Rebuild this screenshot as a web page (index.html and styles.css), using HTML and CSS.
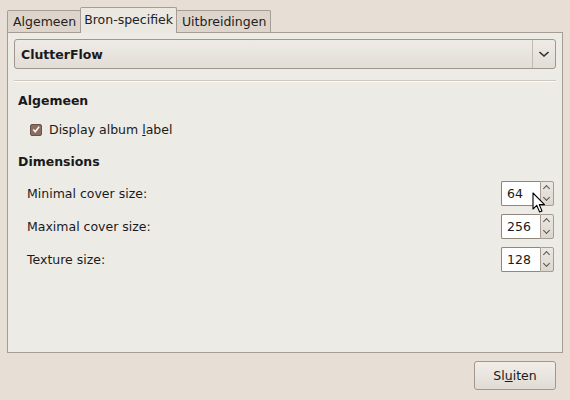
FILE: index.html
```html
<!DOCTYPE html>
<html>
<head>
<meta charset="utf-8">
<link rel="stylesheet" href="styles.css">
</head>
<body>
<div class="window">
  <div class="tabs">
    <div class="tab">Algemeen</div>
    <div class="tab active">Bron-specifiek</div>
    <div class="tab">Uitbreidingen</div>
  </div>
  <div class="panel">
    <div class="combo">
      <span class="combo-text">ClutterFlow</span>
      <span class="combo-arrow">
        <svg width="12" height="8" viewBox="0 0 12 8"><path d="M1.5 2 L6 6 L10.5 2" fill="none" stroke="#2e2e2e" stroke-width="1.6"/></svg>
      </span>
    </div>
    <div class="sep"></div>
    <div class="section-title">Algemeen</div>
    <label class="check-row">
      <span class="checkbox">
        <svg width="11" height="11" viewBox="0 0 11 11"><path d="M2.5 5.5 L4.7 8 L9 2.3" fill="none" stroke="#fff" stroke-width="1.7"/></svg>
      </span>
      <span>Display album <u>l</u>abel</span>
    </label>
    <div class="section-title second">Dimensions</div>
    <div class="spin-row">
      <span>Minimal cover size:</span>
      <span class="spin"><span class="entry">64</span><span class="btns"><span class="up"></span><span class="down"></span></span></span>
    </div>
    <div class="spin-row">
      <span>Maximal cover size:</span>
      <span class="spin"><span class="entry">256</span><span class="btns"><span class="up"></span><span class="down"></span></span></span>
    </div>
    <div class="spin-row">
      <span>Texture size:</span>
      <span class="spin"><span class="entry">128</span><span class="btns"><span class="up"></span><span class="down"></span></span></span>
    </div>
  </div>
  <div class="footer">
    <button class="btn">Sl<u>u</u>iten</button>
  </div>
  <svg class="cursor" width="14" height="22" viewBox="0 0 14 22"><path d="M1 1 L1 17 L4.8 13.4 L7.6 20 L10 19 L7.3 12.6 L12.5 12.6 Z" fill="#fff" stroke="#000" stroke-width="1.1" stroke-linejoin="round"/></svg>
</div>
</body>
</html>
```
FILE: styles.css
```css
html, body {
  margin: 0;
  padding: 0;
}
body {
  width: 570px;
  height: 400px;
  background: #e7ded6;
  font-family: "DejaVu Sans", sans-serif;
  font-size: 12px;
  color: #1a1a1a;
  overflow: hidden;
}
.window {
  position: relative;
  padding: 7px 7px 0 7px;
  height: 393px;
}
.tabs {
  display: flex;
  align-items: flex-end;
  height: 25px;
  padding-left: 0;
}
.tab {
  height: 22px;
  line-height: 21px;
  padding: 0 4px 0 5px;
  border: 1px solid #a59d93;
  border-bottom: none;
  background: #ddd5cc;
  border-radius: 2px 2px 0 0;
  box-sizing: border-box;
  color: #222;
  font-size: 12.5px;
}
.tab + .tab {
  margin-left: -1px;
}
.tab.active {
  height: 26px;
  line-height: 23px;
  background: #ebe7e1;
  position: relative;
  z-index: 1;
  margin-bottom: -1px;
  padding: 0 3px 0 3px;
}
.panel {
  height: 321px;
  box-sizing: border-box;
  border: 1px solid #a59d93;
  background: #edebe6;
  padding: 6px 6px 0 6px;
  display: flex;
  flex-direction: column;
}
.combo {
  height: 30px;
  box-sizing: border-box;
  border: 1px solid #9f978d;
  border-radius: 3px;
  background: linear-gradient(#eeebe6, #e2ddd6);
  display: flex;
  align-items: center;
}
.combo-text {
  flex: 1;
  font-weight: bold;
  padding-left: 6px;
  font-size: 12.5px;
}
.combo-arrow {
  width: 22px;
  height: 28px;
  border-left: 1px solid #c2bab0;
  display: flex;
  align-items: center;
  justify-content: center;
}
.sep {
  height: 1px;
  background: #cfc8bf;
  border-bottom: 1px solid #fbfaf8;
  margin-top: 11px;
}
.section-title {
  font-weight: bold;
  margin-top: 11px;
  padding-left: 4px;
  font-size: 12.5px;
}
.section-title.second {
  margin-top: 17px;
}
.check-row {
  display: flex;
  align-items: center;
  margin-top: 14px;
  padding-left: 16px;
  gap: 7px;
  font-size: 12.5px;
}
.checkbox {
  width: 12px;
  height: 12px;
  box-sizing: border-box;
  background: #8a6e60;
  border: 1px solid #6a5449;
  border-radius: 2px;
  display: flex;
  align-items: center;
  justify-content: center;
}
.spin-row {
  display: flex;
  align-items: center;
  justify-content: space-between;
  padding-left: 13px;
  padding-right: 2px;
  height: 25px;
  margin-top: 8px;
  font-size: 12.5px;
}
.section-title.second + .spin-row {
  margin-top: 12px;
}
.spin {
  display: flex;
  height: 25px;
}
.entry {
  width: 39px;
  box-sizing: border-box;
  border: 1px solid #8f877d;
  border-right: none;
  background: #fff;
  border-radius: 2px 0 0 2px;
  padding-left: 5px;
  line-height: 23px;
  font-size: 12.5px;
}
.btns {
  width: 14px;
  box-sizing: border-box;
  border: 1px solid #a59d93;
  border-radius: 0 2px 2px 0;
  background: linear-gradient(#ece8e2, #dcd6ce);
  display: flex;
  flex-direction: column;
}
.btns span {
  flex: 1;
  position: relative;
}
.btns span::after {
  content: "";
  position: absolute;
  left: 3px;
  width: 4px;
  height: 4px;
  border-left: 1px solid #555;
  border-top: 1px solid #555;
}
.btns .up::after {
  top: 4px;
  transform: rotate(45deg);
}
.btns .down::after {
  top: 1px;
  transform: rotate(225deg);
}
.footer {
  display: flex;
  justify-content: flex-end;
  padding-top: 8px;
  padding-right: 7px;
}
.btn {
  width: 82px;
  height: 29px;
  border: 1px solid #a0988e;
  border-radius: 3px;
  background: linear-gradient(#f1eeea, #e0dbd4);
  font-family: "DejaVu Sans", sans-serif;
  font-size: 12.5px;
  color: #1a1a1a;
  padding: 0;
}
.cursor {
  position: absolute;
  left: 532px;
  top: 192px;
}
```
